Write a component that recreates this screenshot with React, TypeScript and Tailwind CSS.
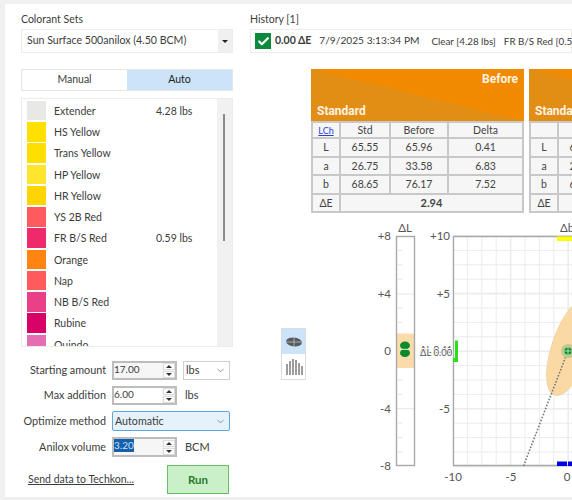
import { Check, ChevronDown } from "lucide-react";

const colorants = [
  { name: "Extender", color: "bg-[#e8e8e4]", amount: "4.28 lbs" },
  { name: "HS Yellow", color: "bg-[#ffe000]" },
  { name: "Trans Yellow", color: "bg-[#ffdf00]" },
  { name: "HP Yellow", color: "bg-[#ffe52e]" },
  { name: "HR Yellow", color: "bg-[#ffd400]" },
  { name: "YS 2B Red", color: "bg-[#ff5a5f]" },
  { name: "FR B/S Red", color: "bg-[#ee2a6b]", amount: "0.59 lbs" },
  { name: "Orange", color: "bg-[#ff8412]" },
  { name: "Nap", color: "bg-[#ff5a5c]" },
  { name: "NB B/S Red", color: "bg-[#ea4088]" },
  { name: "Rubine", color: "bg-[#d90368]" },
  { name: "Quindo", color: "bg-[#e56db1]" },
];

function Spinner() {
  return (
    <div className="flex h-full w-[13px] shrink-0 flex-col items-center justify-center gap-[1px] bg-[#f4f4f4]">
      <div className="flex h-[7px] w-[12px] items-center justify-center border border-[#ddd] bg-white">
        <div className="border-x-[3px] border-b-[3px] border-x-transparent border-b-[#333]" />
      </div>
      <div className="flex h-[7px] w-[12px] items-center justify-center border border-[#ddd] bg-white">
        <div className="border-x-[3px] border-t-[3px] border-x-transparent border-t-[#333]" />
      </div>
    </div>
  );
}

function NumberBox({ value, selected, tinted }: { value: string; selected?: boolean; tinted?: boolean }) {
  return (
    <div className={`flex h-full w-[65px] shrink-0 items-center justify-between border-2 border-[#bdbdbd] ${tinted ? "bg-[#f6f6f6]" : "bg-white"}`}>
      <span className={`self-start text-[10px] leading-[13px] ${selected ? "bg-[#1460ac] text-[#cfe0f2]" : ""}`}>{value}</span>
      <Spinner />
    </div>
  );
}

function FormRow({ label, className, children }: { label: string; className: string; children: React.ReactNode }) {
  return (
    <div className={`flex items-center ${className}`}>
      <div className="mr-[6px] w-[85px] shrink-0 whitespace-nowrap text-right text-[10.8px]">{label}</div>
      {children}
    </div>
  );
}

function ColorTable({ title, rows, delta, link }: { title: string; rows: string[][]; delta: string; link?: boolean }) {
  const cell = "border-2 border-[#c8c8c8] text-center";
  return (
    <div className="w-[213px] shrink-0">
      <div className="relative h-[52px] bg-[#f28a00] text-[12px] font-bold text-[#fdf3e4] [font-family:'Roboto',sans-serif]">
        <div className="absolute inset-0 bg-[#e28d14] [clip-path:polygon(0_0,100%_100%,0_100%)]" />
        <span className="absolute right-[6px] top-[1px]">{title}</span>
        <span className="absolute bottom-[1px] left-[6px]">Standard</span>
      </div>
      <table className="w-full table-fixed border-collapse bg-[#f6f6f6] text-[10.5px] leading-none text-[#444]">
        <colgroup>
          <col className="w-[28px]" />
          <col className="w-[50px]" />
          <col className="w-[58px]" />
          <col />
        </colgroup>
        <tbody>
          <tr className="h-[16px]">
            <td className={`${cell} text-[9px] text-[#2b3fd1] underline`}>{link ? "LCh" : ""}</td>
            <td className={cell}>Std</td>
            <td className={cell}>{title}</td>
            <td className={cell}>Delta</td>
          </tr>
          {rows.map((r) => (
            <tr key={r[0]} className="h-[18.5px]">
              {r.map((v, i) => (
                <td key={i} className={cell}>{v}</td>
              ))}
            </tr>
          ))}
          <tr className="h-[18.5px]">
            <td className={cell}>ΔE</td>
            <td className={`${cell} text-[11px] font-bold`} colSpan={3}>{delta}</td>
          </tr>
        </tbody>
      </table>
    </div>
  );
}

function Chart() {
  const gx = [0, 1, 2, 3, 4, 5, 6, 7, 8].map((i) => 453 + i * 14.4);
  const gy = [0, 1, 2, 3, 4, 5, 6, 7, 8, 9, 10, 11, 12, 13, 14, 15, 16].map((i) => 236 + i * 14.4);
  const label = { fill: "#555", fontSize: 11.5 };
  return (
    <svg viewBox="370 215 202 279" className="h-[279px] w-[202px] shrink-0">
      {/* dL strip */}
      {[250.4, 264.8, 279.2, 308, 322.4, 380, 394.4, 423, 437.5, 452].map((y) => (
        <line key={y} x1="398" x2="402" y1={y} y2={y} stroke="#e2e2e2" />
      ))}
      <line x1="397" x2="415" y1="294" y2="294" stroke="#e6e6e6" />
      <line x1="397" x2="415" y1="408.7" y2="408.7" stroke="#e6e6e6" />
      <rect x="397" y="333.5" width="17" height="34.5" fill="#fbdba9" />
      <rect x="396.5" y="236.5" width="18" height="229" fill="none" stroke="#a8a8a8" strokeWidth="1.4" />
      <ellipse cx="405" cy="345.5" rx="5" ry="4" fill="#0b8a2a" />
      <ellipse cx="405" cy="353" rx="5" ry="4" fill="#0b8a2a" />
      <line x1="400" x2="410" y1="349.3" y2="349.3" stroke="#d8efd8" />

      {/* a/b grid */}
      {gx.map((x, i) => (
        <line key={x} x1={x} x2={x} y1="236" y2="466" stroke="#ececec" strokeWidth={i === 4 || i === 8 ? 1.6 : 1} />
      ))}
      {gy.map((y, i) => (
        <line key={y} x1="453" x2="572" y1={y} y2={y} stroke="#ececec" strokeWidth={i % 4 === 0 ? 1.6 : 1} />
      ))}
      <polyline points="572,236.5 453.5,236.5 453.5,465.5 572,465.5" fill="none" stroke="#a8a8a8" strokeWidth="1.3" />

      <ellipse cx="571" cy="347" rx="19" ry="51" transform="rotate(19 571 347)" fill="#fbd9a5" stroke="#ecc992" strokeWidth="0.6" />
      <line x1="523.5" y1="466" x2="566" y2="356" stroke="#777" strokeWidth="1.6" strokeDasharray="1.6 1.6" />
      <circle cx="568" cy="351" r="7" fill="#bccb8c" />
      <circle cx="568" cy="351" r="3.6" fill="#0b8a2a" />
      <line x1="564.4" x2="571.6" y1="351" y2="351" stroke="#d8efd8" strokeWidth="0.8" />
      <line x1="568" x2="568" y1="347.4" y2="354.6" stroke="#d8efd8" strokeWidth="0.8" />

      {/* out of gamut markers */}
      <path d="M453 340.5h5v21.5h-5v-4h2v-17.500h-2z" fill="#27e21b" />
      <rect x="557" y="236.500" width="15" height="4.500" fill="#ffff00" />
      <rect x="557" y="461.500" width="10" height="4.500" fill="#0000e6" />
      <rect x="568" y="461.500" width="4" height="4.500" fill="#0000e6" />

      <g {...label} textAnchor="end">
        <text x="391" y="240">+8</text>
        <text x="391" y="298">+4</text>
        <text x="391" y="355">0</text>
        <text x="391" y="413">-4</text>
        <text x="391" y="470">-8</text>
        <text x="450" y="240">+10</text>
        <text x="450" y="298">+5</text>
        <text x="450" y="413">-5</text>
      </g>
      <g {...label} textAnchor="middle">
        <text x="405" y="232">ΔL</text>
        <text x="567" y="232">Δb</text>
        <text x="453" y="481">-10</text>
        <text x="511" y="481">-5</text>
        <text x="567" y="481">0</text>
      </g>
      <g fill="#555" fontSize="9.5">
        <text x="420" y="353">ΔL 0.41</text>
        <text x="420" y="356" stroke="#fff" strokeWidth="2" paintOrder="stroke">ΔL 0.00</text>
      </g>
    </svg>
  );
}

export default function App() {
  return (
    <div className="h-[500px] w-[572px] overflow-hidden bg-[#f0f0f0] pl-[5px] pt-[4px] text-[#3c3c3c] [font-family:'Lato',sans-serif]">
      <div className="flex h-[493px] w-[567px] overflow-hidden bg-white">
        {/* Left column */}
        <div className="ml-4 w-[212px] shrink-0 pt-[7px]">
          <div className="h-[18px] text-[10.5px] leading-[16px]">Colorant Sets</div>
          <div className="flex h-[24px] items-center justify-between border border-[#ececec] pl-[5px] text-[10.6px]">
            <span>Sun Surface 500anilox (4.50 BCM)</span>
            <div className="flex h-full w-[14px] items-center justify-center bg-[#f0f0f0]">
              <div className="border-x-[3px] border-t-[3px] border-x-transparent border-t-[#222]" />
            </div>
          </div>

          <div className="mt-4 flex h-[22px] border border-[#e4e4e4] text-[10.5px]">
            <div className="flex w-[105px] items-center justify-center">Manual</div>
            <div className="flex flex-1 items-center justify-center bg-[#cce4fa] text-[#222]">Auto</div>
          </div>

          <div className="relative mt-[7px] h-[249px] overflow-hidden border border-[#ececec] pl-[5px] pt-[1px] text-[10.5px]">
            <div className="absolute inset-y-0 right-0 w-[15px] bg-[#f1f1f1]">
              <div className="absolute left-[6px] top-[15px] h-[127px] w-[2px] bg-[#8a8a8a]" />
            </div>
            {colorants.map((c) => (
              <div key={c.name} className="flex h-[21.25px] items-center">
                <div className={`h-[19.5px] w-[19px] shrink-0 ${c.color}`} />
                <span className="ml-[8px] w-[102px] shrink-0 pt-[2px]">{c.name}</span>
                {c.amount && <span className="pt-[2px]">{c.amount}</span>}
              </div>
            ))}
          </div>

          <div className="mt-[14px]">
            <FormRow label="Starting amount" className="h-[19px]">
              <NumberBox value="17.00" tinted />
              <div className="ml-[6px] flex h-full w-[47px] items-center justify-between border border-[#d0d0d0] pl-[2px] pr-[3px] text-[11px]">
                lbs
                <ChevronDown size={11} strokeWidth={1.5} color="#666" />
              </div>
            </FormRow>
            <FormRow label="Max addition" className="mt-[6px] h-[19px]">
              <NumberBox value="6.00" />
              <span className="ml-[8px] text-[11px]">lbs</span>
            </FormRow>
            <FormRow label="Optimize method" className="mt-[6px] h-[20px]">
              <div className="flex h-full w-[118px] items-center justify-between rounded-[2px] border border-[#5ea6dc] bg-[#e5f1fb] pl-[2px] pr-[3px] text-[10.7px]">
                Automatic
                <ChevronDown size={11} strokeWidth={1.5} color="#666" />
              </div>
            </FormRow>
            <FormRow label="Anilox volume" className="mt-[6px] h-[20px]">
              <NumberBox value="3.20" selected tinted />
              <span className="ml-[8px] text-[11px]">BCM</span>
            </FormRow>
          </div>

          <div className="mt-[8px] flex items-center justify-between pl-[7px] pr-[4px]">
            <span className="text-[10.5px] underline">Send data to Techkon...</span>
            <button className="h-[29px] w-[62px] border border-[#6bbb6b] bg-[#c9f0c6] text-[11.5px] font-bold text-[#2a7a2a]">Run</button>
          </div>
        </div>

        {/* Right column */}
        <div className="ml-[17px] min-w-0 flex-1 overflow-hidden pt-[7px]">
          <div className="h-[18px] text-[10.5px] leading-[16px]">History [1]</div>
          <div className="flex h-[24px] items-center whitespace-nowrap border border-[#ececec] pl-[4px]">
            <div className="flex h-[16px] w-[16px] shrink-0 items-center justify-center bg-[#0b8a3e]">
              <Check size={13} strokeWidth={4} color="white" />
            </div>
            <span className="ml-[4px] text-[10.5px] font-bold">0.00 ΔE</span>
            <span className="ml-[8px] text-[10.2px]">7/9/2025 3:13:34 PM</span>
            <span className="ml-[12px] text-[9.8px]">Clear [4.28 lbs]</span>
            <span className="ml-[8px] text-[9.8px]">FR B/S Red [0.59 lbs]</span>
          </div>

          <div className="ml-[61px] mt-4 flex gap-[5px]">
            <ColorTable
              title="Before"
              link
              delta="2.94"
              rows={[
                ["L", "65.55", "65.96", "0.41"],
                ["a", "26.75", "33.58", "6.83"],
                ["b", "68.65", "76.17", "7.52"],
              ]}
            />
            <ColorTable
              title="After"
              delta="0.00"
              rows={[
                ["L", "65.55", "65.55", "0.00"],
                ["a", "26.75", "26.75", "0.00"],
                ["b", "68.65", "68.65", "0.00"],
              ]}
            />
          </div>

          <div className="ml-[31px] mt-[2px] flex items-start">
            <div className="mt-[113px] w-[25px] shrink-0 border border-[#dcdcdc]">
              <div className="flex h-[25px] items-center justify-center bg-[#cce4fa]">
                <svg width="18" height="10" viewBox="0 0 18 10">
                  <ellipse cx="9" cy="5" rx="8" ry="4.500" transform="rotate(6 9 5)" fill="#5a5a5a" />
                  <line x1="1" x2="17" y1="5" y2="5" stroke="#cce4fa" strokeWidth="0.6" />
                  <line x1="9" x2="9" y1="0" y2="10" stroke="#cce4fa" strokeWidth="0.6" />
                </svg>
              </div>
              <div className="flex h-[25px] items-center justify-center">
                <svg width="18" height="18" viewBox="0 0 18 18" stroke="#666" strokeWidth="1.3">
                  <line x1="2" x2="2" y1="6" y2="17" />
                  <line x1="5" x2="5" y1="3" y2="17" />
                  <line x1="8" x2="8" y1="1" y2="17" />
                  <line x1="11" x2="11" y1="2" y2="17" />
                  <line x1="14" x2="14" y1="5" y2="17" />
                  <line x1="17" x2="17" y1="8" y2="17" />
                </svg>
              </div>
            </div>
            <div className="ml-[64px]">
              <Chart />
            </div>
          </div>
        </div>
      </div>
    </div>
  );
}
